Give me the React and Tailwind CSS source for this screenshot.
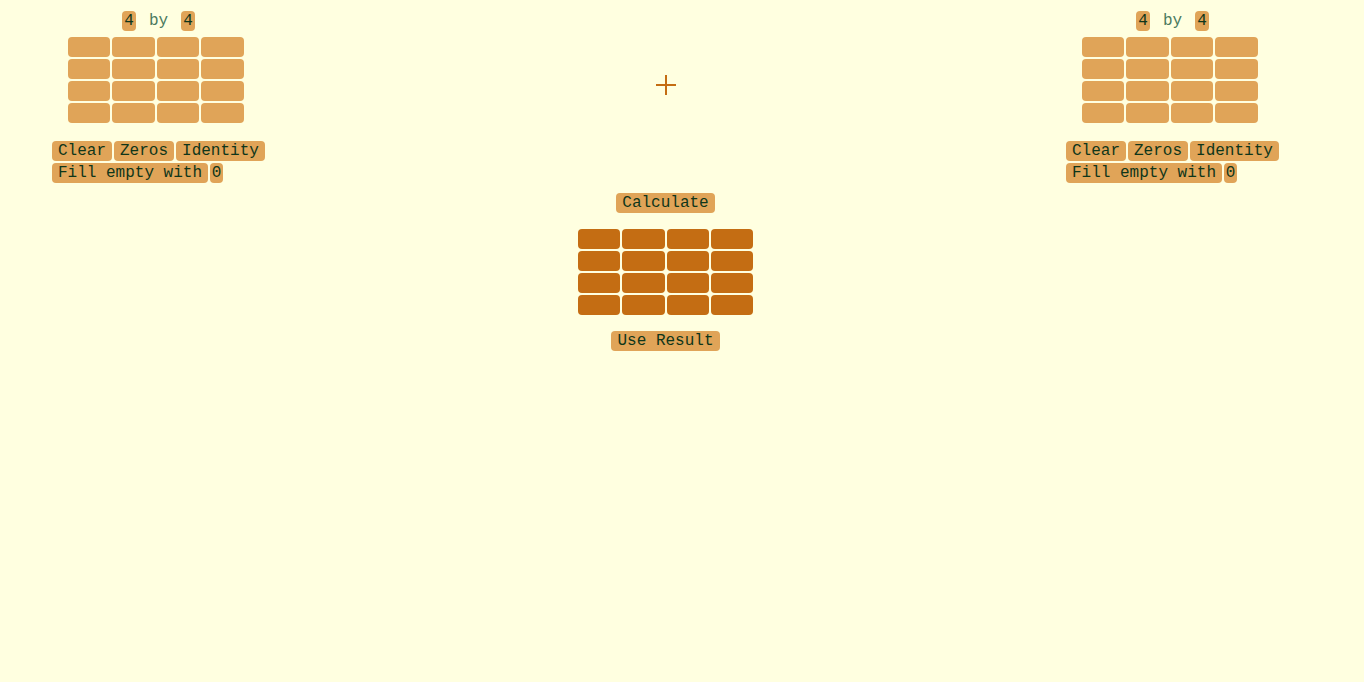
import React from "react";

const mono = { fontFamily: '"Liberation Mono", monospace' };

function Grid({ dark }) {
  const cells = Array.from({ length: 16 });
  return (
    <div className="grid grid-cols-4 gap-[2px] w-[175.5px]">
      {cells.map((_, i) => (
        <div
          key={i}
          className={`h-[20px] rounded-[4px] ${dark ? "bg-[#c46d13]" : "bg-[#e0a458]"}`}
        />
      ))}
    </div>
  );
}

function Btn({ children, className = "" }) {
  return (
    <div
      className={`h-[20px] leading-[20px] px-[6px] rounded-[4px] bg-[#e0a458] text-[16px] text-[#0f361a] ${className}`}
    >
      {children}
    </div>
  );
}

function Panel() {
  return (
    <div className="w-[213px] flex flex-col">
      <div className="flex items-center h-[20px] pl-[70px] text-[16px] text-[#0f361a]">
        <div className="w-[14px] h-[20px] leading-[20px] text-center rounded-[4px] bg-[#e0a458]">4</div>
        <div className="w-[45px] text-center text-[#4a7a5e] leading-[20px]">by</div>
        <div className="w-[14px] h-[20px] leading-[20px] text-center rounded-[4px] bg-[#e0a458]">4</div>
      </div>
      <div className="mt-[6px] pl-[16px]">
        <Grid />
      </div>
      <div className="mt-[18px] flex gap-[2px]">
        <Btn>Clear</Btn>
        <Btn>Zeros</Btn>
        <Btn>Identity</Btn>
      </div>
      <div className="mt-[2px] flex gap-[2px]">
        <Btn>Fill empty with</Btn>
        <div className="h-[20px] leading-[20px] w-[13px] text-center rounded-[4px] bg-[#e0a458] text-[16px] text-[#0f361a]">0</div>
      </div>
    </div>
  );
}

export default function App() {
  return (
    <div className="min-h-[682px] w-full bg-[#ffffe0]" style={mono}>
      <div className="flex pl-[52px] pt-[11px]">
        <Panel />
        <div className="w-[801px] flex flex-col items-center">
          <div className="mt-[64px] w-[20px] h-[20px]">
            <svg width="20" height="20" viewBox="0 0 20 20">
              <line x1="0" y1="10" x2="20" y2="10" stroke="#c46d13" strokeWidth="2" />
              <line x1="10" y1="0" x2="10" y2="20" stroke="#c46d13" strokeWidth="2" />
            </svg>
          </div>
          <div className="mt-[98px]">
            <Btn>Calculate</Btn>
          </div>
          <div className="mt-[16px]">
            <Grid dark />
          </div>
          <div className="mt-[16px]">
            <Btn>Use Result</Btn>
          </div>
        </div>
        <Panel />
      </div>
    </div>
  );
}
